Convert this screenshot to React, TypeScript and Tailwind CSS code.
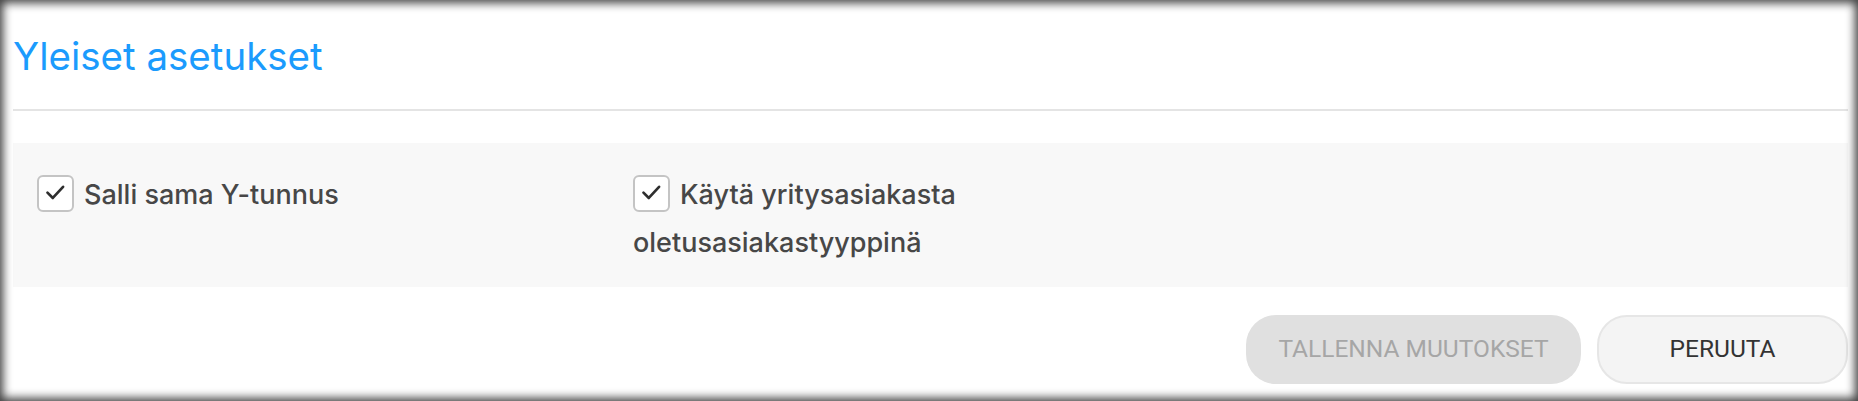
import React from "react";

function Check({ label, className = "" }: { label: string; className?: string }) {
    return (
        <label className={`block text-[27px] leading-[48px] font-medium text-[#474747] ${className}`}>
            <span className="inline-flex align-middle mr-[10px] -mt-[6px] w-[37px] h-[37px] rounded-[6px] border-2 border-[#c4c4c4] bg-white items-center justify-center">
                <svg width="37" height="37" viewBox="0 0 37 37" fill="none">
                    <path d="M9.5 17.5 L15.5 23.5 L27 11" stroke="#2e2e2e" strokeWidth="3" strokeLinecap="round" strokeLinejoin="round" />
                </svg>
            </span>
            {label}
        </label>
    );
}

export default function App() {
    return (
        <div className="relative w-[1858px] h-[401px] bg-white overflow-hidden" style={{ fontFamily: "Inter, 'Noto Sans', sans-serif" }}>
            <div className="pl-[13px] pr-[10px]">
                <div className="h-[111px] flex items-center border-b-2 border-[#e4e4e4]">
                    <h1 className="text-[38.5px] font-normal text-[#1b9bfd] pt-[5px]">Yleiset asetukset</h1>
                </div>

                <div className="mt-[32px] h-[144px] bg-[#f8f8f8] pl-[24px] pt-[28px] grid grid-cols-[596px_1fr]">
                    <Check label="Salli sama Y-tunnus" />
                    <Check label="Käytä yritysasiakasta oletusasiakastyyppinä" className="max-w-[380px]" />
                </div>

                <div className="mt-[28px] flex justify-end gap-[16px]" style={{ fontFamily: "Roboto, sans-serif" }}>
                    <button className="w-[335px] h-[69px] rounded-[30px] bg-[#e0e0e0] text-[#a6a6a6] text-[24.5px]">
                        TALLENNA MUUTOKSET
                    </button>
                    <button className="w-[251px] h-[69px] rounded-[30px] bg-[#f4f4f4] border-2 border-[#e6e6e6] text-[#333] text-[24.5px]">
                        PERUUTA
                    </button>
                </div>
            </div>

            <div className="pointer-events-none absolute inset-0 shadow-[inset_0_0_10px_3px_rgba(0,0,0,0.75)]" />
        </div>
    );
}
